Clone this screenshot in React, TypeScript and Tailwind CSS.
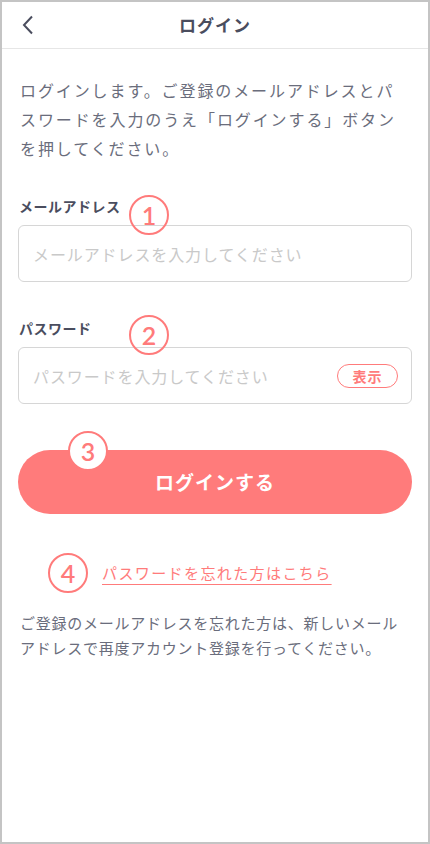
import { useState } from "react";

function Badge({ n, filled = false }: { n: number; filled?: boolean }) {
  return (
    <span
      className={`flex items-center justify-center w-10 h-10 rounded-full border-2 border-[#ff7b7b] text-[#ff7b7b] text-[25px] leading-none font-semibold [font-family:Lato,sans-serif] ${
        filled ? "bg-white" : ""
      }`}
    >
      {n}
    </span>
  );
}

export default function App() {
  const [show, setShow] = useState(false);
  return (
    <div className="h-[844px] border-2 border-[#c4c4c4] bg-white flex flex-col [font-family:'Noto_Sans_CJK_JP',sans-serif]">
      {/* header */}
      <header className="h-[47px] border-b border-[#e6e6e6] grid grid-cols-[48px_1fr_48px] items-center">
        <button className="flex items-center justify-center h-full pl-1" aria-label="戻る">
          <svg width="14" height="20" viewBox="0 0 14 20" fill="none" stroke="#4a4d5e" strokeWidth="2">
            <path d="M11 1.5 3 10l8 8.5" />
          </svg>
        </button>
        <h1 className="text-center text-[17px] font-bold tracking-[1px] text-[#4a4d5e]">ログイン</h1>
        <div />
      </header>

      <main className="px-4 pt-[27px]">
        <p className="text-[16px] leading-[29px] tracking-[1.9px] text-[#6a6d7c] pl-[2px]">
          ログインします。ご登録のメールアドレスとパスワードを入力のうえ「ログインする」ボタンを押してください。
        </p>

        <div className="relative mt-[33px]">
          <label className="block text-[14px] leading-5 font-bold tracking-[0.5px] text-[#4a4d5e] pl-[1px]">
            メールアドレス
          </label>
          <input
            type="email"
            placeholder="メールアドレスを入力してください"
            className="mt-[9px] w-full h-[57px] rounded-md border border-[#d6d6d6] px-[14px] text-[16px] tracking-[0.9px] text-[#3f4254] placeholder:text-[#c9c9c9] outline-none"
          />
          <div className="absolute left-[111px] top-[-1px]">
            <Badge n={1} />
          </div>
        </div>

        <div className="relative mt-[36px]">
          <label className="block text-[14px] leading-5 font-bold tracking-[0.5px] text-[#4a4d5e] pl-[1px]">
            パスワード
          </label>
          <div className="mt-[9px] h-[57px] rounded-md border border-[#d6d6d6] flex items-center pl-[14px] pr-[13px] gap-2">
            <input
              type={show ? "text" : "password"}
              placeholder="パスワードを入力してください"
              className="flex-1 min-w-0 h-full text-[16px] tracking-[0.9px] text-[#3f4254] placeholder:text-[#c9c9c9] outline-none"
            />
            <button
              onClick={() => setShow(!show)}
              className="w-[61px] h-[24px] rounded-full border border-[#ff7b7b] text-[#ff7b7b] text-[14px] leading-none font-bold tracking-[1px] flex items-center justify-center"
            >
              表示
            </button>
          </div>
          <div className="absolute left-[111px] top-[-3px]">
            <Badge n={2} />
          </div>
        </div>

        <div className="relative mt-[46px]">
          <button className="w-full h-16 rounded-full bg-[#ff7b7b] text-white text-[19px] font-bold tracking-[1px]">
            ログインする
          </button>
          <div className="absolute left-[50px] top-[-19px]">
            <Badge n={3} filled />
          </div>
        </div>

        <div className="mt-[39px] flex items-center gap-[14px] pl-[30px]">
          <Badge n={4} />
          <a href="#" className="text-[15px] tracking-[1.4px] text-[#ff7b7b] underline underline-offset-[5px] decoration-1">
            パスワードを忘れた方はこちら
          </a>
        </div>

        <p className="mt-[17px] text-[15px] leading-[25px] tracking-[0.75px] text-[#6a6d7c] pl-[2px]">
          ご登録のメールアドレスを忘れた方は、新しいメールアドレスで再度アカウント登録を行ってください。
        </p>
      </main>
    </div>
  );
}
